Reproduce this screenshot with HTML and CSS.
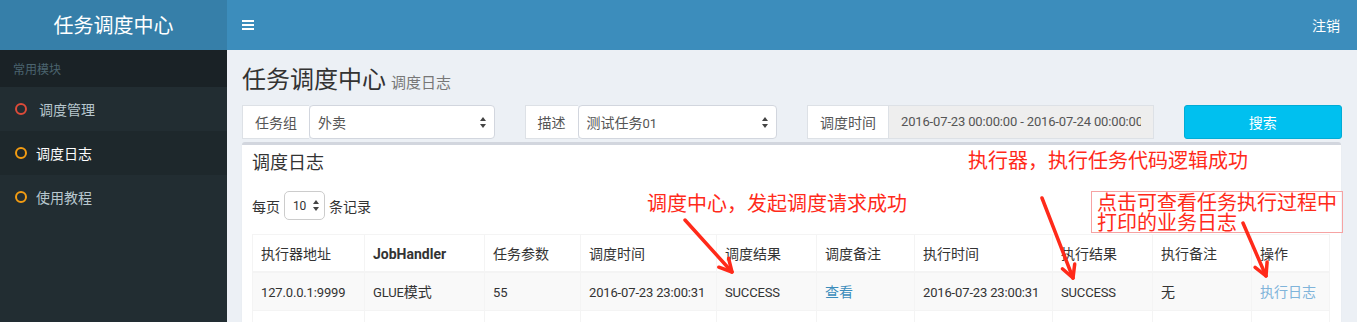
FILE: index.html
```html
<!DOCTYPE html>
<html lang="zh-CN">
<head>
<meta charset="utf-8">
<title>任务调度中心</title>
<link rel="stylesheet" href="styles.css">
</head>
<body>
<div class="app">
  <div class="logo">任务调度中心</div>
  <nav class="navbar">
    <span class="toggle"><i></i><i></i><i></i></span>
    <a class="logout">注销</a>
  </nav>
  <aside class="sidebar">
    <div class="side-header">常用模块</div>
    <ul class="menu">
      <li class="item"><span class="ring red"></span><span class="label wide">调度管理</span></li>
      <li class="item active"><span class="ring orange"></span><span class="label">调度日志</span></li>
      <li class="item"><span class="ring orange"></span><span class="label">使用教程</span></li>
    </ul>
  </aside>
  <section class="content">
    <h1 class="page-title">任务调度中心<small>调度日志</small></h1>
    <div class="filters">
      <div class="igroup">
        <span class="addon">任务组</span>
        <div class="select"><span>外卖</span>
          <svg class="updown" width="6" height="11" viewBox="0 0 6 11"><path d="M3 0L6 4H0Z M3 11L6 7H0Z" fill="#444"/></svg>
        </div>
      </div>
      <div class="igroup">
        <span class="addon">描述</span>
        <div class="select"><span>测试任务<span class="num">01</span></span>
          <svg class="updown" width="6" height="11" viewBox="0 0 6 11"><path d="M3 0L6 4H0Z M3 11L6 7H0Z" fill="#444"/></svg>
        </div>
      </div>
      <div class="igroup">
        <span class="addon">调度时间</span>
        <div class="dateinput"><span class="datetext num">2016-07-23 00:00:00 - 2016-07-24 00:00:00</span></div>
      </div>
      <div class="btn-search">搜索</div>
    </div>
    <div class="box">
      <div class="box-header"><h3>调度日志</h3></div>
      <div class="box-body">
        <div class="length">
          <span>每页</span>
          <div class="mini-select"><span class="num">10</span>
            <svg width="6" height="11" viewBox="0 0 6 11"><path d="M3 0L6 4H0Z M3 11L6 7H0Z" fill="#444"/></svg>
          </div>
          <span>条记录</span>
        </div>
        <table class="grid">
          <colgroup>
            <col class="w112"><col class="w120"><col class="w96"><col class="w136"><col class="w100">
            <col class="w98"><col class="w138"><col class="w100"><col class="w99"><col class="w78">
          </colgroup>
          <thead>
            <tr>
              <th>执行器地址</th><th><b class="num jh">JobHandler</b></th><th>任务参数</th><th>调度时间</th><th>调度结果</th>
              <th>调度备注</th><th>执行时间</th><th>执行结果</th><th>执行备注</th><th>操作</th>
            </tr>
          </thead>
          <tbody>
            <tr>
              <td><span class="num">127.0.0.1:9999</span></td>
              <td><span class="num">GLUE</span>模式</td>
              <td><span class="num">55</span></td>
              <td><span class="num">2016-07-23 23:00:31</span></td>
              <td><span class="num">SUCCESS</span></td>
              <td><a class="link">查看</a></td>
              <td><span class="num">2016-07-23 23:00:31</span></td>
              <td><span class="num">SUCCESS</span></td>
              <td>无</td>
              <td><a class="link light">执行日志</a></td>
            </tr>
            <tr>
              <td>&nbsp;</td><td></td><td></td><td></td><td></td><td></td><td></td><td></td><td></td><td></td>
            </tr>
          </tbody>
        </table>
      </div>
    </div>
  </section>
</div>
<div class="notes">
  <div class="note n1">调度中心，发起调度请求成功</div>
  <div class="note n2">执行器，执行任务代码逻辑成功</div>
  <div class="note n3">点击可查看任务执行过程中<br>打印的业务日志</div>
  <svg class="arrows" width="1357" height="322" viewBox="0 0 1357 322">
    <g fill="none" stroke="#ff2a1a" stroke-width="3.5" stroke-linecap="round" stroke-linejoin="round">
      <path d="M685 220L732 272"/>
      <path d="M718.8 267.2L732 272L728.6 258.4"/>
      <path d="M1042 198L1073 278"/>
      <path d="M1062.4 268.8L1073 278L1074.7 264.1"/>
      <path d="M1243 223L1266 276"/>
      <path d="M1255.1 267.3L1266 276L1267.1 262"/>
    </g>
  </svg>
</div>
</body>
</html>
```

FILE: styles.css
```css
* { box-sizing: border-box; margin: 0; padding: 0; }
html, body { height: 322px; overflow: hidden; }
body {
  font-family: "Noto Sans CJK SC", "Noto Sans", sans-serif;
  font-size: 14px;
  line-height: 20px;
  color: #333;
  background: #ecf0f5;
  position: relative;
}
.num {
  font-family: Roboto, "Noto Sans CJK SC", sans-serif;
  font-size: 13px;
  line-height: 1;
  letter-spacing: -0.15px;
}
.app {
  display: grid;
  grid-template-columns: 227px 1fr;
  grid-template-rows: 50px 272px;
  height: 322px;
}
.logo {
  background: #367fa9;
  color: #fff;
  font-size: 20px;
  line-height: 50px;
  text-align: center;
}
.navbar {
  background: #3c8dbc;
  display: flex;
  align-items: center;
  justify-content: space-between;
  padding: 0 17px 0 15px;
}
.toggle { display: flex; flex-direction: column; gap: 2px; width: 12px; }
.toggle i { display: block; height: 2px; background: #fff; }
.logout { color: #fff; font-size: 14px; }

.sidebar { background: #222d32; }
.side-header {
  background: #1a2226;
  color: #4b646f;
  font-size: 12px;
  line-height: 17px;
  height: 37px;
  padding: 10px 13px;
}
.menu { list-style: none; }
.item {
  display: flex;
  align-items: center;
  height: 44px;
  padding-left: 15px;
  color: #b8c7ce;
  background: #222d32;
}
.item.active { background: #1e282c; color: #fff; }
.ring {
  width: 12px;
  height: 12px;
  border: 2px solid;
  border-radius: 50%;
}
.ring.red { border-color: #dd4b39; }
.ring.orange { border-color: #f39c12; }
.label { margin-left: 9px; }
.label.wide { margin-left: 12px; }

.content { padding: 15px 16px 0 15px; overflow: hidden; }
.page-title {
  font-size: 24px;
  line-height: 26px;
  height: 26px;
  font-weight: normal;
  color: #333;
  margin-bottom: 14px;
  display: flex;
  align-items: baseline;
}
.page-title small { font-size: 15px; line-height: 26px; color: #777; margin-left: 5px; }

.filters {
  display: grid;
  grid-template-columns: 252.5px 252.5px 346.67px 158.33px;
  column-gap: 30px;
  height: 34px;
}
.igroup { display: flex; height: 34px; }
.addon {
  padding: 0 12px;
  border: 1px solid #dde1e6;
  border-right: 0;
  background: #fff;
  color: #555;
  line-height: 32px;
  white-space: nowrap;
}
.select {
  flex: 1;
  display: flex;
  align-items: center;
  justify-content: space-between;
  border: 1px solid #d2d6de;
  border-radius: 4px;
  background: #fff;
  color: #555;
  padding: 0 8px 0 8px;
}
.dateinput {
  flex: 1;
  border: 1px solid #dde1e6;
  background: #eee;
  color: #555;
  padding: 0 12px;
  height: 34px;
  display: flex;
  align-items: center;
  min-width: 0;
}
.datetext { display: block; overflow: hidden; white-space: nowrap; line-height: 20px; }
.btn-search {
  background: #00c0ef;
  border: 1px solid #00acd6;
  border-radius: 3px;
  color: #fff;
  display: flex;
  align-items: center;
  justify-content: center;
  height: 34px;
}

.box {
  margin-top: 3px;
  background: #fff;
  border-top: 3px solid #d2d6de;
  border-radius: 3px;
  box-shadow: 0 1px 1px rgba(0,0,0,0.1);
  height: 200px;
}
.box-header { padding: 6px 10px 4px; }
.box-header h3 { font-size: 18px; line-height: 20px; font-weight: normal; color: #333; }
.box-body { padding: 16px 10px 10px; }
.length {
  display: flex;
  align-items: center;
  gap: 4px;
  height: 29px;
  margin-bottom: 14px;
}
.mini-select {
  width: 41px;
  height: 29px;
  border: 1px solid #ccc;
  border-radius: 5px;
  display: flex;
  align-items: center;
  justify-content: space-between;
  padding: 0 5px 0 8px;
}
.mini-select .num { font-size: 12px; }

.grid { width: 1077px; border-collapse: collapse; table-layout: fixed; }
.w112 { width: 112px; } .w120 { width: 120px; } .w96 { width: 96px; } .w136 { width: 136px; }
.w100 { width: 100px; } .w98 { width: 98px; } .w138 { width: 138px; } .w99 { width: 99px; } .w78 { width: 78px; }
.grid th, .grid td {
  border: 1px solid #f4f4f4;
  line-height: 20px;
  height: 37px;
  text-align: left;
  font-weight: normal;
  white-space: nowrap;
  overflow: hidden;
  vertical-align: middle;
}
.grid th { padding: 0 8px; border-bottom-width: 2px; }
.grid th .jh { font-weight: bold; font-size: 14px; letter-spacing: 0; }
.grid td { padding: 0 8px; height: 39px; }
.grid tbody tr:nth-child(odd) { background: #f9f9f9; }
.link { color: #3c8dbc; }
.link.light { color: #80b4da; }

.notes { position: absolute; left: 0; top: 0; width: 1357px; height: 322px; pointer-events: none; }
.note {
  position: absolute;
  color: #ff2a1a;
  font-size: 20px;
  line-height: 20px;
  white-space: nowrap;
}
.n1 { left: 647px; top: 193px; }
.n2 { left: 968px; top: 150px; }
.n3 {
  left: 1091px;
  top: 191px;
  width: 252px;
  height: 42px;
  border: 1px solid #f6a3a3;
  padding-left: 5px;
  background: rgba(255,255,255,0.4);
}
.arrows { position: absolute; left: 0; top: 0; }
```
